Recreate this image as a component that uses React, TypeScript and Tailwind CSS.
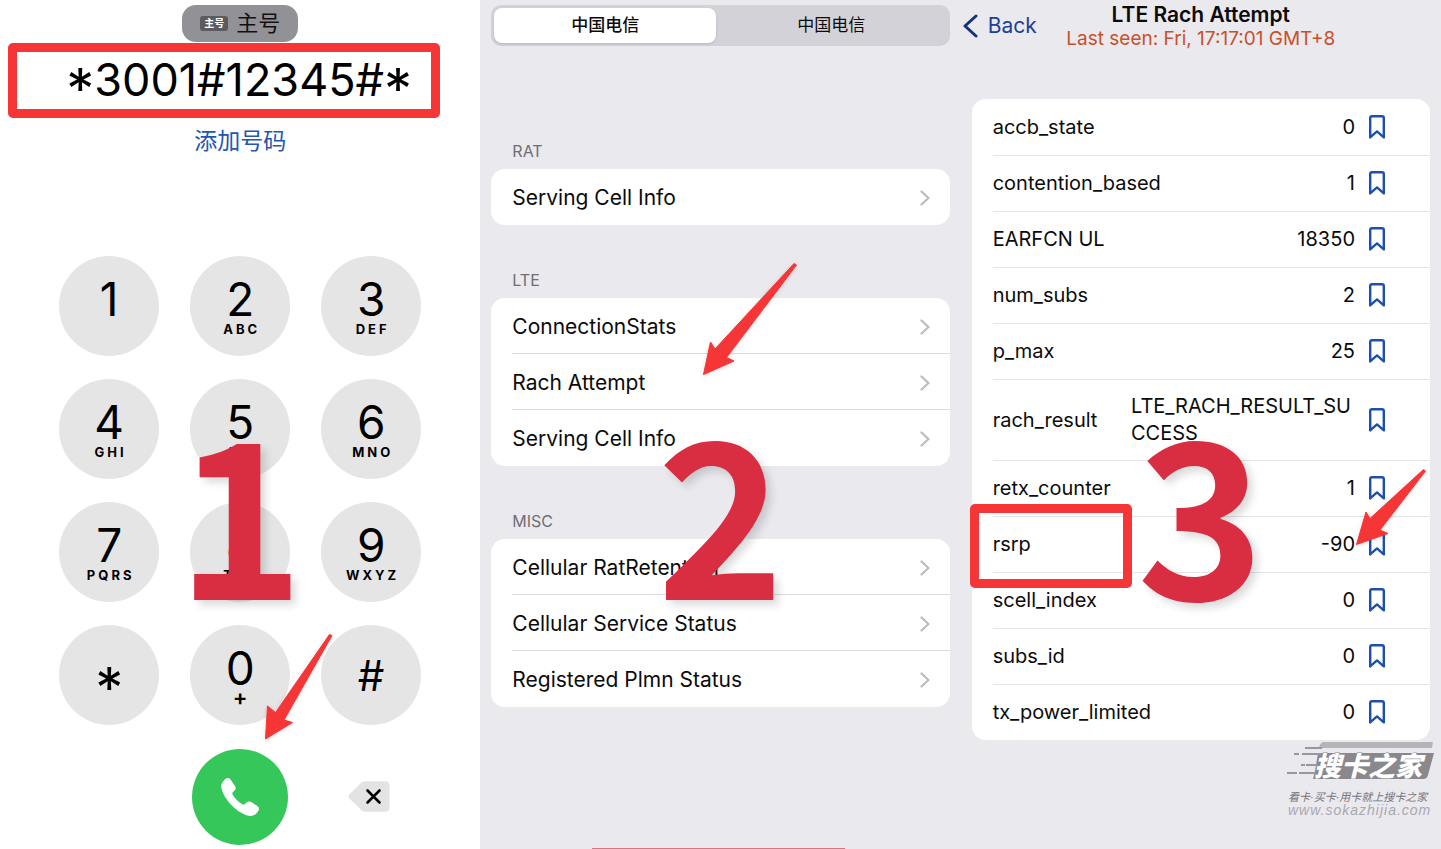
import type { FC, ReactNode } from 'react';

interface Key {
    digit: string;
    letters?: string;
}

interface Section {
    title: string;
    items: string[];
}

interface Metric {
    name: string;
    value: string;
}

const KEYS: Key[] = [
    { digit: '1', letters: '' },
    { digit: '2', letters: 'ABC' },
    { digit: '3', letters: 'DEF' },
    { digit: '4', letters: 'GHI' },
    { digit: '5', letters: 'JKL' },
    { digit: '6', letters: 'MNO' },
    { digit: '7', letters: 'PQRS' },
    { digit: '8', letters: 'TUV' },
    { digit: '9', letters: 'WXYZ' },
    { digit: '*' },
    { digit: '0', letters: '+' },
    { digit: '#' },
];

const SECTIONS: Section[] = [
    { title: 'RAT', items: ['Serving Cell Info'] },
    { title: 'LTE', items: ['ConnectionStats', 'Rach Attempt', 'Serving Cell Info'] },
    { title: 'MISC', items: ['Cellular RatRetention', 'Cellular Service Status', 'Registered Plmn Status'] },
];

const METRICS: Metric[] = [
    { name: 'accb_state', value: '0' },
    { name: 'contention_based', value: '1' },
    { name: 'EARFCN UL', value: '18350' },
    { name: 'num_subs', value: '2' },
    { name: 'p_max', value: '25' },
    { name: 'rach_result', value: 'LTE_RACH_RESULT_SUCCESS' },
    { name: 'retx_counter', value: '1' },
    { name: 'rsrp', value: '-90' },
    { name: 'scell_index', value: '0' },
    { name: 'subs_id', value: '0' },
    { name: 'tx_power_limited', value: '0' },
];

const StepNumber: FC<{ children: ReactNode }> = ({ children }) => (
    <div className="pointer-events-none absolute inset-x-0 top-[398px] text-center font-['Noto_Sans_CJK_SC',sans-serif] text-[216px] leading-[216px] font-bold text-[#d92d41] [text-shadow:5px_5px_8px_rgba(0,0,0,0.15)]">
        {children}
    </div>
);

const Arrow: FC<{ className: string; viewBox: string; points: string }> = ({ className, viewBox, points }) => (
    <svg className={`pointer-events-none absolute overflow-visible drop-shadow-sm ${className}`} viewBox={viewBox} aria-hidden="true">
        <polygon points={points} fill="#f63536" stroke="#f63536" strokeWidth="1" strokeLinejoin="round" />
    </svg>
);

const Bookmark: FC = () => (
    <svg className="h-6 w-4" viewBox="0 0 16 24" fill="none" stroke="#1c4fb0" strokeWidth="2.4" strokeLinejoin="round" aria-hidden="true">
        <path d="M1.2 22.4V3Q1.2 1.2 3 1.2H13Q14.8 1.2 14.8 3V22.4L8 16.4Z" />
    </svg>
);

const Chevron: FC = () => (
    <svg className="h-4 w-[10px]" viewBox="0 0 10 16" fill="none" stroke="#bcbcc0" strokeWidth="2.2" strokeLinecap="round" strokeLinejoin="round" aria-hidden="true">
        <path d="M1.5 1.5L8.5 8L1.5 14.5" />
    </svg>
);

const Dialer: FC = () => (
    <section className="relative flex flex-col items-center bg-white pt-[5px]">
        <button className="flex h-[37px] items-center gap-2 rounded-[14px] bg-[#929196] px-[18px] text-[22px] text-[#111]">
            <span className="rounded-[3px] bg-[#5c5b60] px-1 text-[10px] leading-[15px] font-bold text-white">主号</span>
            主号
        </button>
        <div className="mt-px flex w-full pr-10 pl-2">
            <output className="h-[75px] w-full rounded-[5px] border-[9px] border-[#f63536] pl-[30px] text-center text-[45px] leading-[55px] whitespace-nowrap text-black">
                <span className="align-[-13px] text-[56px] leading-[40px]">*</span>
                3001#12345#
                <span className="align-[-13px] text-[56px] leading-[40px]">*</span>
            </output>
        </div>
        <a href="#add" className="mt-[7px] text-[23px] leading-8 text-[#2257b0]">添加号码</a>

        <div className="mt-[99px] grid grid-cols-3 gap-x-[31px] gap-y-[23px]">
            {KEYS.map(({ digit, letters }) => (
                <button key={digit} className="flex size-[100px] flex-col items-center justify-center rounded-full bg-[#e5e5e5] pt-[2px] text-[46px] leading-[42px] text-black">
                    {digit === '*' ? (
                        <span className="pt-6 text-[56px]">*</span>
                    ) : (
                        <span className={letters === undefined ? 'text-[42px]' : ''}>{digit}</span>
                    )}
                    {letters !== undefined && (
                        <span className={letters === '+' ? 'h-4 text-[22px] leading-4 font-semibold' : 'h-4 pl-[3px] text-[13px] leading-[18px] font-bold tracking-[3px]'}>
                            {letters}
                        </span>
                    )}
                </button>
            ))}
            <button aria-label="Call" className="col-start-2 mt-px flex size-24 items-center justify-center justify-self-center rounded-full bg-[#35c75a]">
                <svg className="size-10" viewBox="0 0 40 40" fill="#fff" aria-hidden="true">
                    <path d="M4 3.5C6.500 .5 8.800 .5 10.500 2.500L15 9C16.200 11 15.700 12.400 14 14L12.800 15.200C12 16.200 12.300 17 13 18.200C15.500 22 18.300 24.800 22 27C23.200 27.700 24 27.800 25 27L26.400 25.600C28 24.200 29.500 24 31.300 25L37 28.800C39.300 30.500 39.700 32.200 37.800 34.800C35.500 38 32.500 39.600 28.500 38.800C17.500 36 4.500 23.500 1.500 11.500C.8 8.200 1.800 5.500 4 3.500Z" />
                </svg>
            </button>
            <button aria-label="Delete" className="flex items-center justify-center pr-1">
                <svg className="h-[31px] w-[42px]" viewBox="0 0 42 31" aria-hidden="true">
                    <path d="M13.500 1.500Q15.200 .3 17.500 .3H37Q41.500 .3 41.500 4.800V26.200Q41.500 30.700 37 30.700H17.500Q15.200 30.700 13.500 29.200L1.500 17.800Q-.5 15.500 1.500 13.200Z" fill="#e3e3e3" />
                    <path d="M19.500 9.500L31.500 21.500M31.500 9.500L19.500 21.500" stroke="#000" strokeWidth="2.600" strokeLinecap="round" />
                </svg>
            </button>
        </div>

        <StepNumber>1</StepNumber>
        <Arrow
            className="top-[634px] left-[265px] h-[106px] w-[68px]"
            viewBox="0 0 68 106"
            points="64.500,0.500 67,1.500 19,86 27.500,88.500 0.500,105 2.500,72 10.500,78.500"
        />
    </section>
);

const FieldTest: FC = () => (
    <section className="relative overflow-hidden bg-[#eae9ee] px-[11px] pt-[5px]">
        <div className="flex h-[41px] rounded-[10px] bg-[#d3d2d9] p-[3px] text-[17px]">
            <button className="w-[49%] rounded-lg bg-white font-medium shadow">中国电信</button>
            <button className="flex-1">中国电信</button>
        </div>
        <div className="mt-[50px]">
            {SECTIONS.map(({ title, items }) => (
                <div key={title}>
                    <h2 className="flex h-[73px] items-end pb-2 pl-[21px] text-[16px] leading-5 text-[#6f6e74]">{title}</h2>
                    <ul className="overflow-hidden rounded-[14px] bg-white pl-[21px]">
                        {items.map((item) => (
                            <li key={item} className="h-14 border-b border-[#dcdcdf] last:border-b-0">
                                <a href="#detail" className="flex h-full items-center justify-between pt-[2px] pr-5 text-[21px]">
                                    {item}
                                    <Chevron />
                                </a>
                            </li>
                        ))}
                    </ul>
                </div>
            ))}
        </div>

        <StepNumber>2</StepNumber>
        <Arrow
            className="top-[263px] left-[223px] h-[112px] w-[94px]"
            viewBox="0 0 94 112"
            points="91,0.500 93.500,2 23.500,94.500 31,98 0.500,111.500 7.500,79 12,86"
        />
        <div className="absolute bottom-0 left-28 h-px w-[253px] bg-[#d97480]" />
    </section>
);

const Watermark: FC = () => (
    <svg className="pointer-events-none absolute top-[740px] right-[5px] h-[80px] w-[150px]" viewBox="0 0 150 80" role="img" aria-label="搜卡之家">
        <path d="M37 2H147L146 8H33Q34 3 37 2Z" fill="#b5b4b8" />
        <path d="M32 13H148L142 35Q141 39 137 39H27L29 31Z" fill="#89888d" />
        <g stroke="#98979c" strokeWidth="2">
            <path d="M19 8H36M8 14H13M16 14H35M15 25H19M20 25H32M1 33H11M13 33H30" />
        </g>
        <text x="28" y="36" fontSize="27" fontWeight="900" fontStyle="italic" fill="#fff" stroke="#89888d" strokeWidth="1" paintOrder="stroke" fontFamily="Noto Sans CJK SC, sans-serif">搜卡之家</text>
        <text x="2" y="61" fontSize="11" fontStyle="italic" fill="#77767c" fontFamily="Liberation Sans, Noto Sans CJK SC, sans-serif">看卡·买卡·用卡就上搜卡之家</text>
        <text x="2" y="75" fontSize="14" fontStyle="italic" fill="#a9a8ae" letterSpacing="1" fontFamily="Liberation Sans, sans-serif">www.sokazhijia.com</text>
    </svg>
);

const RachAttempt: FC = () => (
    <section className="relative overflow-hidden bg-[#eae9ee] px-[11px]">
        <header className="relative flex h-[99px] flex-col items-center">
            <button className="absolute top-2 -left-[10px] flex h-9 items-center gap-[10px] text-[21px] text-[#1d4195]">
                <svg className="h-6 w-4" viewBox="0 0 16 24" fill="none" stroke="#153178" strokeWidth="3" strokeLinecap="round" strokeLinejoin="round" aria-hidden="true">
                    <path d="M14 2L3 12L14 22" />
                </svg>
                Back
            </button>
            <h1 className="pt-[2px] text-[21px] leading-[26px] font-semibold">LTE Rach Attempt</h1>
            <p className="text-[19px] leading-[22px] text-[#c9502b]">Last seen: Fri, 17:17:01 GMT+8</p>
        </header>
        <div className="rounded-[14px] bg-white pl-[21px]">
            <table className="w-full table-fixed text-[20px]">
                <colgroup>
                    <col />
                    <col className="w-[224px]" />
                    <col className="w-[75px]" />
                </colgroup>
                <tbody>
                    {METRICS.map(({ name, value }) => (
                        <tr key={name} className="h-14 border-b border-[#e4e4e7] last:border-b-0">
                            <th scope="row" className="text-left font-normal whitespace-nowrap">{name}</th>
                            {value.length > 10 ? (
                                <td className="py-[13px] leading-[27px] break-all">{value}</td>
                            ) : (
                                <td className="text-right">{value}</td>
                            )}
                            <td className="pl-[14px]">
                                <button aria-label={`Bookmark ${name}`} className="block">
                                    <Bookmark />
                                </button>
                            </td>
                        </tr>
                    ))}
                </tbody>
            </table>
        </div>

        <div className="pointer-events-none absolute top-[504px] left-[9px] h-[84px] w-[162px] rounded-[5px] border-[9px] border-[#f63536]" />
        <StepNumber>3</StepNumber>
        <Arrow
            className="top-[469px] left-[395px] h-[77px] w-[71px]"
            viewBox="0 0 71 77"
            points="67.500,0.500 69.500,2 24,61 32,64.500 0.500,75.500 10,43 14,49.500"
        />
        <Watermark />
    </section>
);

const App: FC = () => {
    return (
        <main className="grid min-h-screen grid-cols-3 font-['Inter','Noto_Sans_CJK_SC',sans-serif] text-[#0b0b0c]">
            <Dialer />
            <FieldTest />
            <RachAttempt />
        </main>
    );
};

export default App;
